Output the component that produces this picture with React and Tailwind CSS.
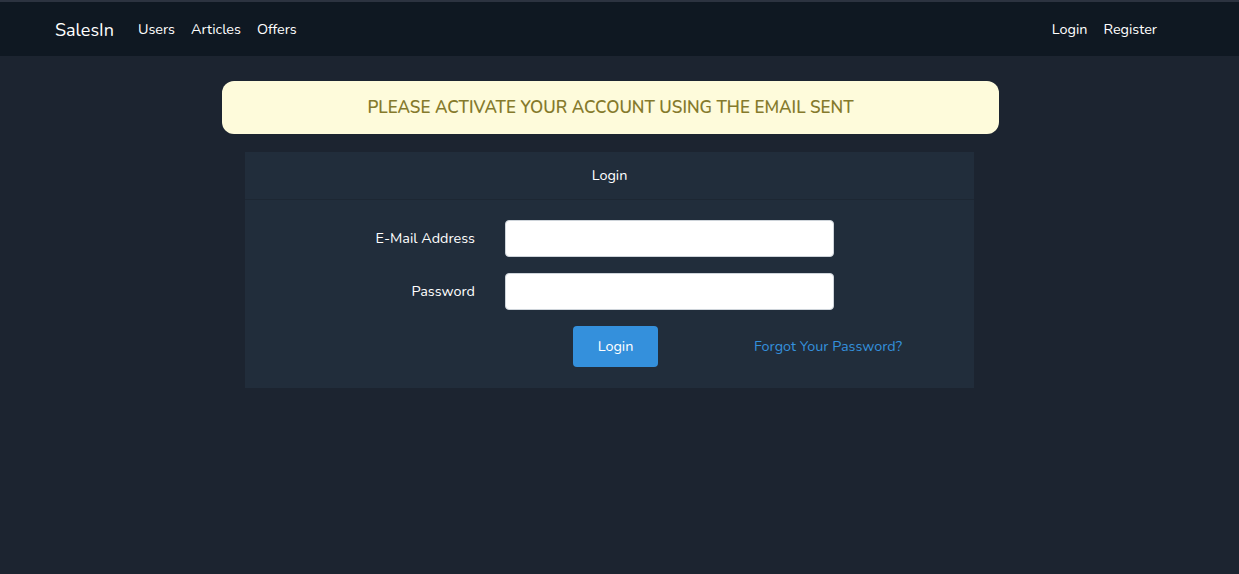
export default function App() {
  return (
    <div className="min-h-[574px] bg-[#1c2430] text-white font-['Nunito','Lato',sans-serif] text-[14.4px]">
      <nav className="border-t-2 border-[#2c3340] bg-[#0f1822] h-[56px] flex items-center pt-[2px] pl-[55px] pr-[82px]">
        <a className="text-[18px] mr-[24px]">SalesIn</a>
        <div className="flex items-center gap-[16px]">
          <a>Users</a>
          <a>Articles</a>
          <a>Offers</a>
        </div>
        <div className="ml-auto flex items-center gap-[16px]">
          <a>Login</a>
          <a>Register</a>
        </div>
      </nav>

      <div className="ml-[222px] mt-[25px] w-[777px] h-[53px] rounded-[12px] bg-[#fefbdb] flex items-center justify-center">
        <span className="text-[17px] font-semibold uppercase text-[#857a2c]">Please activate your account using the email sent</span>
      </div>

      <div className="ml-[245px] mt-[18px] w-[729px] bg-[#212d3b]">
        <div className="h-[48px] border-b border-[#1d2733] flex items-center justify-center">Login</div>
        <div className="px-[20px] pt-[20px] pb-[21px] flex flex-col gap-[16px]">
          <div className="flex items-center">
            <label className="w-[210px] text-right">E-Mail Address</label>
            <input type="email" className="ml-[30px] w-[329px] h-[37px] bg-white rounded-[4px] border border-[#ced4da]" />
          </div>
          <div className="flex items-center">
            <label className="w-[210px] text-right">Password</label>
            <input type="password" className="ml-[30px] w-[329px] h-[37px] bg-white rounded-[4px] border border-[#ced4da]" />
          </div>
          <div className="flex items-center">
            <button className="ml-[308px] w-[85px] h-[41px] rounded-[4px] bg-[#3490dc] text-white">Login</button>
            <a className="ml-[96px] text-[#3490dc]">Forgot Your Password?</a>
          </div>
        </div>
      </div>
    </div>
  );
}
